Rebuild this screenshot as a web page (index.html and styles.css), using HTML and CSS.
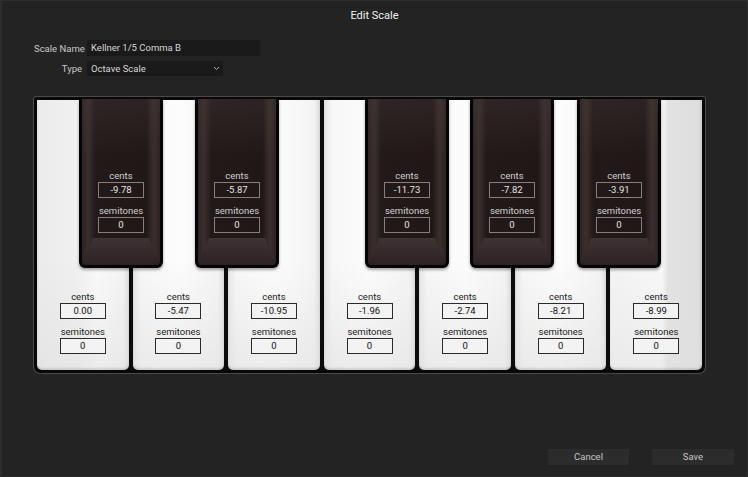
FILE: index.html
```html
<!DOCTYPE html>
<html>
<head>
<meta charset="utf-8">
<link rel="stylesheet" href="styles.css">
</head>
<body>
<div class="dialog">
  <div class="title">Edit Scale</div>
  <div class="form">
    <div class="row">
      <span class="lbl">Scale Name</span>
      <div class="input name">Kellner 1/5 Comma B</div>
    </div>
    <div class="row">
      <span class="lbl">Type</span>
      <div class="input select">Octave Scale
        <svg class="chev" width="7" height="5" viewBox="0 0 7 5"><path d="M1 1 L3.5 3.5 L6 1" fill="none" stroke="#aaa" stroke-width="1"/></svg>
      </div>
    </div>
  </div>

  <div class="keyboard">
    <div class="whites">
      <div class="wkey k1"><div class="fields"><span class="flbl">cents</span><div class="fbox">0.00</div><span class="flbl gap">semitones</span><div class="fbox">0</div></div></div>
      <div class="wkey"><div class="fields"><span class="flbl">cents</span><div class="fbox">-5.47</div><span class="flbl gap">semitones</span><div class="fbox">0</div></div></div>
      <div class="wkey"><div class="fields"><span class="flbl">cents</span><div class="fbox">-10.95</div><span class="flbl gap">semitones</span><div class="fbox">0</div></div></div>
      <div class="wkey k4"><div class="fields"><span class="flbl">cents</span><div class="fbox">-1.96</div><span class="flbl gap">semitones</span><div class="fbox">0</div></div></div>
      <div class="wkey"><div class="fields"><span class="flbl">cents</span><div class="fbox">-2.74</div><span class="flbl gap">semitones</span><div class="fbox">0</div></div></div>
      <div class="wkey"><div class="fields"><span class="flbl">cents</span><div class="fbox">-8.21</div><span class="flbl gap">semitones</span><div class="fbox">0</div></div></div>
      <div class="wkey k7"><div class="fields"><span class="flbl">cents</span><div class="fbox">-8.99</div><span class="flbl gap">semitones</span><div class="fbox">0</div></div></div>
    </div>

    <div class="bkey b1"><div class="bface"><div class="bevel"></div><div class="fields dark"><span class="flbl">cents</span><div class="fbox">-9.78</div><span class="flbl gap">semitones</span><div class="fbox">0</div></div></div></div>
    <div class="bkey b2"><div class="bface"><div class="bevel"></div><div class="fields dark"><span class="flbl">cents</span><div class="fbox">-5.87</div><span class="flbl gap">semitones</span><div class="fbox">0</div></div></div></div>
    <div class="bkey b3"><div class="bface"><div class="bevel"></div><div class="fields dark"><span class="flbl">cents</span><div class="fbox">-11.73</div><span class="flbl gap">semitones</span><div class="fbox">0</div></div></div></div>
    <div class="bkey b4"><div class="bface"><div class="bevel"></div><div class="fields dark"><span class="flbl">cents</span><div class="fbox">-7.82</div><span class="flbl gap">semitones</span><div class="fbox">0</div></div></div></div>
    <div class="bkey b5"><div class="bface"><div class="bevel"></div><div class="fields dark"><span class="flbl">cents</span><div class="fbox">-3.91</div><span class="flbl gap">semitones</span><div class="fbox">0</div></div></div></div>
  </div>

  <div class="footer">
    <button class="btn cancel">Cancel</button>
    <button class="btn save">Save</button>
  </div>
</div>
</body>
</html>
```
FILE: styles.css
```css
html, body {
  margin: 0;
  padding: 0;
  background: #232323;
}
body {
  font-family: Roboto, "Liberation Sans", sans-serif;
}
.dialog {
  width: 748px;
  height: 477px;
  box-sizing: border-box;
  display: flex;
  flex-direction: column;
  background: #232323;
  border-left: 2px solid #2d2d2d;
  border-right: 1px solid #2f2f2f;
  border-top: 1px solid #2e2e2e;
  border-bottom: 1px solid #2a2a2a;
}
.title {
  height: 29px;
  line-height: 29px;
  text-align: center;
  color: #f0f0f0;
  font-size: 11px;
}
.form {
  padding-top: 10px;
  padding-left: 32px;
  display: flex;
  flex-direction: column;
  gap: 5px;
}
.row {
  display: flex;
  align-items: center;
  gap: 5px;
}
.lbl {
  width: 48px;
  text-align: right;
  color: #c8c8c8;
  font-size: 9.5px;
  white-space: nowrap;
}
.input {
  height: 16px;
  line-height: 16px;
  background: #1a1a1a;
  color: #d6d6d6;
  font-size: 9.5px;
  padding-left: 4px;
  box-sizing: border-box;
}
.name {
  width: 173px;
}
.select {
  width: 136px;
  height: 15px;
  line-height: 15px;
  display: flex;
  align-items: center;
  justify-content: space-between;
  padding-right: 3px;
}
.chev {
  display: block;
}
.keyboard {
  position: relative;
  margin-top: 21px;
  margin-left: 32px;
  width: 671px;
  height: 276px;
  box-sizing: border-box;
  border: 3px solid #080808;
  border-radius: 2px 2px 6px 6px;
  background: #0c0c0c;
  box-shadow: 0 0 0 1px #4a4a4a;
}
.whites {
  display: flex;
  gap: 4px;
  height: 100%;
}
.wkey {
  flex: 1;
  display: flex;
  flex-direction: column;
  justify-content: flex-end;
  align-items: center;
  padding-bottom: 16px;
  border-radius: 0 0 5px 5px;
  background:
    linear-gradient(to bottom, rgba(255,255,255,0) 60%, rgba(225,225,225,0.6) 100%),
    linear-gradient(to right, #e4e4e4 0, #f7f7f7 8px, #fcfcfc 50%, #f4f4f4 calc(100% - 6px), #dcdcdc 100%);
  box-shadow: inset 0 -2px 2px rgba(0,0,0,0.12);
}
.k1 {
  background:
    linear-gradient(to bottom, rgba(255,255,255,0) 60%, rgba(225,225,225,0.6) 100%),
    linear-gradient(to right, #ebebeb 0, #f0f0f0 40px, #fafafa 60px, #f4f4f4 calc(100% - 6px), #dcdcdc 100%);
}
.k7 {
  background:
    linear-gradient(to bottom, rgba(255,255,255,0) 60%, rgba(225,225,225,0.5) 100%),
    linear-gradient(to right, #f3f3f3 0, #f8f8f8 52px, #e2e2e2 58px, #dedede calc(100% - 4px), #d0d0d0 100%);
}
.fields {
  display: flex;
  flex-direction: column;
  align-items: center;
}
.flbl {
  height: 12px;
  line-height: 12px;
  font-size: 9.5px;
  color: #222;
}
.flbl.gap {
  margin-top: 7px;
}
.fbox {
  width: 46px;
  height: 16px;
  line-height: 14px;
  box-sizing: border-box;
  border: 1px solid #2a2a2a;
  background: #f3f3f3;
  text-align: center;
  font-size: 9.5px;
  color: #111;
}
.bkey {
  position: absolute;
  top: -1px;
  width: 84px;
  height: 169px;
  box-sizing: border-box;
  padding: 0 3px 3px;
  background: #050505;
  border-radius: 0 0 6px 6px;
  box-shadow: 0 2px 3px rgba(0,0,0,0.35);
}
.b1 { left: 42px; }
.b2 { left: 158px; }
.b3 { left: 328px; }
.b4 { left: 433px; }
.b5 { left: 540px; }
.bface {
  position: relative;
  height: 100%;
  border-radius: 0 0 4px 4px;
  overflow: hidden;
  background:
    linear-gradient(to bottom, rgba(70,58,56,0.35) 0, rgba(0,0,0,0) 35%),
    linear-gradient(to right, #2c2322 0, #3a2f2d 6px, #2e2523 10px, #221a19 13px, #201817 calc(100% - 13px), #2e2523 calc(100% - 10px), #3a2f2d calc(100% - 6px), #2c2322 100%);
  display: flex;
  flex-direction: column;
  align-items: center;
  padding-top: 71px;
  box-sizing: border-box;
}
.bevel {
  position: absolute;
  left: 0;
  right: 0;
  bottom: 0;
  height: 27px;
  background: linear-gradient(to bottom, #3f3432 0, #33292a 60%, #2a2120 100%);
  clip-path: polygon(11px 0, calc(100% - 11px) 0, 100% 100%, 0 100%);
}
.fields.dark .flbl {
  color: #cfcfcf;
}
.fields.dark .fbox {
  background: transparent;
  border-color: #8c7d7a;
  color: #e4e4e4;
}
.fields.dark {
  position: relative;
}
.footer {
  margin-top: auto;
  padding-bottom: 11px;
  padding-right: 13px;
  display: flex;
  justify-content: flex-end;
  gap: 23px;
}
.btn {
  height: 16px;
  border: none;
  padding: 0;
  background: #2c2c2c;
  color: #c4c4c4;
  font-family: Roboto, "Liberation Sans", sans-serif;
  font-size: 9.5px;
  line-height: 16px;
}
.cancel { width: 81px; }
.save { width: 82px; }
```
